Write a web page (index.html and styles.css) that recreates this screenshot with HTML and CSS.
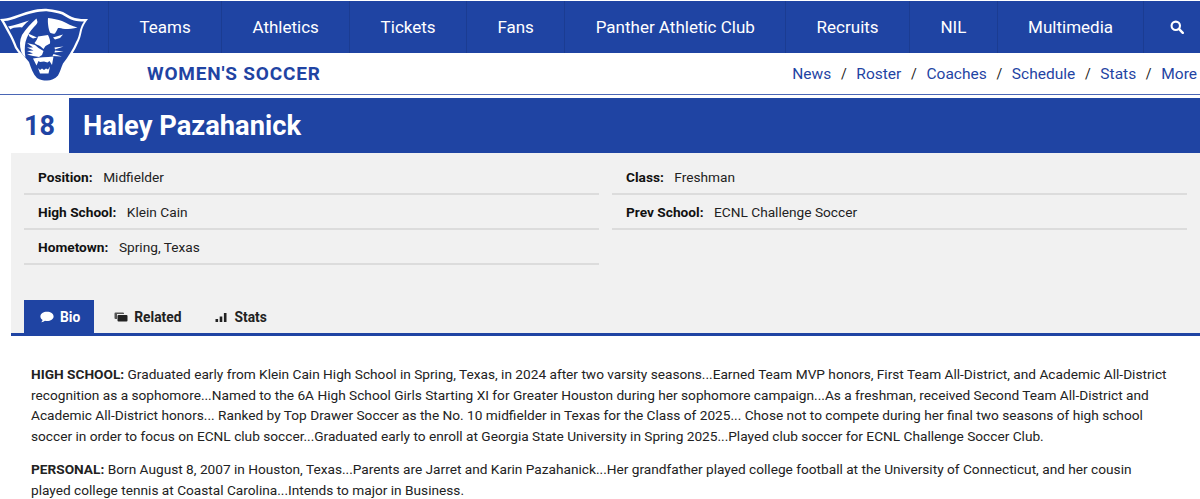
FILE: index.html
```html
<!DOCTYPE html>
<html lang="en">
<head>
<meta charset="utf-8">
<title>Haley Pazahanick</title>
<link rel="stylesheet" href="styles.css">
</head>
<body>
<header class="site-header">
  <svg class="logo" viewBox="0 0 100 80" aria-hidden="true">
    <path d="M0 14 C5 14 9 13 13 11.500 C19 9.500 25 7 30 6 C36 4.500 42 3.500 48 4 C54 4.500 59 5.500 63 7 C67 9 71 12 75 13 C79 14 83 14 88 14 C85 18 83 21 82 25 C81 30 80 34 78 38 C75 45 70 53 65 60 C63 64 62 68 60 72 C56 76 51 78 47 78 C42 78 38 77 35 75 C31 70 29 64 27 58 C23 53 18 48 15 43 C13 38 11 33 8 28 C5 23 3 18 0 14Z" fill="#fff"/>
    <path d="M4 16 C9 16 14 14 18 12.500 C24 10.500 29 8.500 33 8 C38 7 44 6 48 6.500 C53 7 58 8 62 9.500 C66 11.500 70 14.500 74 15.500 C77 16.300 80 16.500 84 16.500 C82 19 81 22 80 25 C79 30 78 34 76 37 C73 44 68 52 63 58.500 C61 63 60 67 58 70.500 C55 74 51 75.500 47 75.500 C43 75.500 40 75 37 73 C33 69 31 63 29 57 C25 52 20 47 17 42 C15 37 13 32 10 27 C8 23 6 19 4 16Z" fill="#1f44a3"/>
    <g fill="#fff">
      <path d="M8 21.500 C14 20.500 22 18 29 15.500 C26 18 24 20 22 22.500 C17 22 12 23 10.500 24.500Z"/>
      <path d="M36.500 13.500 C31 18 26 24 22 30 C19.500 35 19.500 41 21 46 C22 49 23.500 51 25.500 52.500 C24.500 47 24.500 42 25.500 37 C27 31 30 26 33.500 22.500 C35.500 20.500 37 19 37.500 17Z"/>
      <path d="M48 13 C53 13.500 58 14.500 62 16 C67 18.500 72 21 77.500 22.500 C73 23.500 69 24 65 24 C62 23.500 60 23 58 23 C57 25 56 27 55 28.500 C53 29 51 28.500 50 27.500 C48.500 24 47.500 18 48 13Z"/>
      <path d="M28 28.500 L37 32.500 L33 33.500 L29.500 31.500Z"/>
      <path d="M53 32.500 L63 29.500 L60 33 L55 34.500Z"/>
      <path d="M38 31.500 L48 30 C49.500 33 50.500 36 50 38.500 L45.500 41 L43.500 44 L40 41 C38 40 36 39.500 34.500 38 C36 36 37.500 34 38 31.500Z"/>
      <path d="M27 38 L35 40 L38.500 43 L43.500 46 L42 50 L39 52 L33 51 L27 49.500 L33 48.500 L27 46 L33.500 45.500 L27 42.500 L33 42.500Z"/>
      <path d="M54.500 42.500 L63.500 41.500 L55 44.500Z M55 45.500 L63.500 46.500 L54.500 47.500Z M53.500 49 L62 51.500 L52.500 51Z"/>
      <path d="M33 53.500 C39 52.500 47 52 53.500 51.500 L52 60 L49.500 56 L47.500 57.500 L44 56.500 L40 57 L38.500 56 L36.500 60.500Z"/>
      <path d="M38 63 L40 65 L42 63.500 L44 65 L46 63.500 L48 64.500 L50 61.500 L48.500 68.500 L40 68.500Z"/>
    </g>
  </svg>
  <nav class="main-nav">
    <a class="nav-item" href="#">Teams</a>
    <a class="nav-item" href="#">Athletics</a>
    <a class="nav-item" href="#">Tickets</a>
    <a class="nav-item" href="#">Fans</a>
    <a class="nav-item" href="#">Panther Athletic Club</a>
    <a class="nav-item" href="#">Recruits</a>
    <a class="nav-item" href="#">NIL</a>
    <a class="nav-item" href="#">Multimedia</a>
    <a class="nav-item nav-search" href="#" aria-label="Search">
      <svg viewBox="0 0 16 16" width="14" height="14"><circle cx="6.600" cy="6.600" r="4.800" fill="none" stroke="#fff" stroke-width="2.400"/><path d="M10.200 10.200 L14.600 14.600" stroke="#fff" stroke-width="2.800" stroke-linecap="round"/></svg>
    </a>
  </nav>
</header>
<div class="sub-header">
  <div class="sport-title">WOMEN'S SOCCER</div>
  <nav class="sub-nav">
    <a href="#">News</a><span>/</span>
    <a href="#">Roster</a><span>/</span>
    <a href="#">Coaches</a><span>/</span>
    <a href="#">Schedule</a><span>/</span>
    <a href="#">Stats</a><span>/</span>
    <a href="#">More</a>
  </nav>
</div>
<div class="player-head">
  <div class="jersey">18</div>
  <h1 class="player-name">Haley Pazahanick</h1>
</div>
<section class="panel">
  <div class="facts">
    <div class="fact-col">
      <div class="fact"><b>Position:</b><span>Midfielder</span></div>
      <div class="fact"><b>High School:</b><span>Klein Cain</span></div>
      <div class="fact"><b>Hometown:</b><span>Spring, Texas</span></div>
    </div>
    <div class="fact-col">
      <div class="fact"><b>Class:</b><span>Freshman</span></div>
      <div class="fact"><b>Prev School:</b><span>ECNL Challenge Soccer</span></div>
    </div>
  </div>
  <div class="tabs">
    <a class="tab tab-active" href="#">
      <svg viewBox="0 0 14 12" width="14" height="12"><path d="M7 .8C3.300.8.400 2.800.400 5.400c0 1.400.900 2.700 2.200 3.500-.200.900-.800 1.700-1.500 2.300 1.500-.100 2.900-.700 3.900-1.500.600.100 1.300.200 2 .200 3.700 0 6.600-2 6.600-4.500S10.700.8 7 .8Z" fill="#fff"/></svg>
      Bio</a>
    <a class="tab" href="#">
      <svg viewBox="0 0 14 12" width="14" height="12"><path d="M.5 2.500 Q.5 1.500 1.500 1.500 H9 Q10 1.500 10 2.500 V3 H3 V8 H1.500 Q.5 8 .5 7Z" fill="#555"/><path d="M3.500 5 Q3.500 4 4.500 4 H12.500 Q13.500 4 13.500 5 V9.500 Q13.500 10.500 12.500 10.500 H4.500 Q3.500 10.500 3.500 9.500Z" fill="#222"/></svg>
      Related</a>
    <a class="tab" href="#">
      <svg viewBox="0 0 14 12" width="14" height="12"><path d="M1.500 8h2.600v3H1.500ZM5.700 5.500h2.600V11H5.700ZM9.900 2h2.600v9H9.900Z" fill="#222"/></svg>
      Stats</a>
  </div>
</section>
<article class="bio">
  <p><b>HIGH SCHOOL:</b> Graduated early from Klein Cain High School in Spring, Texas, in 2024 after two varsity seasons...Earned Team MVP honors, First Team All-District, and Academic All-District recognition as a sophomore...Named to the 6A High School Girls Starting XI for Greater Houston during her sophomore campaign...As a freshman, received Second Team All-District and Academic All-District honors... Ranked by Top Drawer Soccer as the No. 10 midfielder in Texas for the Class of 2025... Chose not to compete during her final two seasons of high school soccer in order to focus on ECNL club soccer...Graduated early to enroll at Georgia State University in Spring 2025...Played club soccer for ECNL Challenge Soccer Club.</p>
  <p><b>PERSONAL:</b> Born August 8, 2007 in Houston, Texas...Parents are Jarret and Karin Pazahanick...Her grandfather played college football at the University of Connecticut, and her cousin played college tennis at Coastal Carolina...Intends to major in Business.</p>
</article>
</body>
</html>
```
FILE: styles.css
```css
* { box-sizing: border-box; }
html, body { margin: 0; padding: 0; height: 499px; overflow: hidden; background: #fff; }
body { font-family: Roboto, "Liberation Sans", sans-serif; color: #222; }
a { text-decoration: none; color: inherit; }

.site-header { position: relative; margin-top: 1px; background: #1f44a3; height: 52px; }
.logo { position: absolute; left: 0; top: 4px; width: 100px; height: 80px; z-index: 2; }
.main-nav { display: flex; height: 52px; padding-left: 108px; }
.nav-item { display: flex; align-items: center; padding: 0 30.400px; font-size: 17px; color: #fff; border-left: 1px solid #1b3c92; }
.nav-search { padding: 0 0 0 26px; flex: 1; }

.sub-header { display: flex; align-items: center; justify-content: space-between; height: 42px; border-bottom: 1px solid #4a66b5; }
.sport-title { margin-left: 147px; font-size: 19px; font-weight: 700; color: #1f44a3; letter-spacing: .8px; }
.sub-nav { display: flex; align-items: center; gap: 9.700px; font-size: 15.500px; color: #1f44a3; padding-right: 3px; }
.sub-nav span { color: #222; font-size: 14px; }

.player-head { display: flex; height: 55px; margin-top: 3px; }
.jersey { width: 69px; padding-left: 24px; font-size: 27px; font-weight: 700; color: #1f44a3; display: flex; align-items: center; }
.player-name { flex: 1; margin: 0; padding-left: 14px; display: flex; align-items: center; background: #1f44a3; color: #fff; font-size: 27.300px; font-weight: 700; }

.panel { margin-left: 11px; background: #f1f1f1; height: 183px; border-bottom: 3px solid #1f44a3; display: flex; flex-direction: column; }
.facts { display: flex; gap: 13px; padding: 7px 13px 0 13px; height: 147px; }
.fact-col { flex: 1; }
.fact { display: flex; gap: 10.500px; align-items: center; height: 35px; padding-left: 14px; font-size: 13.700px; border-bottom: 2px solid #dcdcdc; color: #222; }
.fact b { color: #111; font-weight: 700; }
.tabs { display: flex; padding-left: 13px; height: 33px; margin-top: auto; }
.tab { display: flex; align-items: center; gap: 6px; padding: 0 13px 0 20px; font-size: 13.800px; font-weight: 700; color: #222; }
.tab-active { background: #1f44a3; color: #fff; padding: 0 14px 0 16px; }

.bio { padding: 28px 30px 0 31px; font-size: 13.680px; line-height: 20.500px; color: #222; }
.bio p { margin: 0 0 13px; }
.bio b { font-weight: 700; }
```
